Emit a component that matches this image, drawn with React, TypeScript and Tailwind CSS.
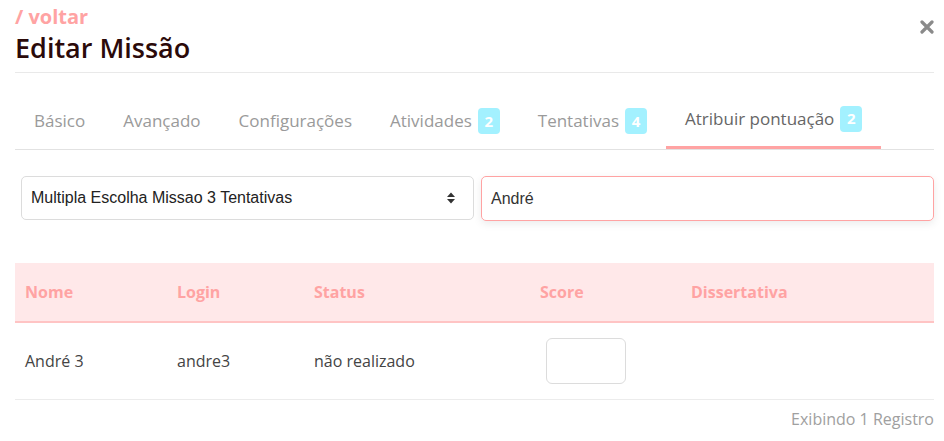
const tabs = [
  { label: "Básico" },
  { label: "Avançado" },
  { label: "Configurações" },
  { label: "Atividades", badge: 2 },
  { label: "Tentativas", badge: 4 },
  { label: "Atribuir pontuação", badge: 2, active: true },
];

const rows = [{ nome: "André 3", login: "andre3", status: "não realizado" }];

function App() {
  return (
    <div className="min-h-[441px] w-[944px] bg-white pl-[15px] pr-[10px] pt-[4px] font-['Open_Sans',sans-serif]">
      <div className="relative border-b border-[#e9e9e9] pb-[8px]">
        <a className="block text-[20px] font-bold leading-[26px] text-[#ffa3a3]">/ voltar</a>
        <h1 className="mt-[2px] text-[27px] font-semibold leading-[32px] text-[#2b0a0a]">Editar Missão</h1>
        <button type="button" className="absolute right-0 top-[16px] text-[#8a8a8a]">
          <svg width="14" height="14" viewBox="0 0 14 14">
            <path d="M2 2 L12 12 M12 2 L2 12" stroke="currentColor" strokeWidth="3.2" strokeLinecap="round" />
          </svg>
        </button>
      </div>

      <div className="mt-[23px] flex border-b border-[#e2e2e2]">
        {tabs.map((tab) => (
          <div
            key={tab.label}
            className={
              tab.active
                ? "flex h-[53px] items-center gap-[6px] border-b-[3px] border-[#ffa3a3] px-[19px] pb-[5px] text-[17px] text-[#666]"
                : "flex h-[53px] items-center gap-[6px] px-[19px] pb-[3px] text-[17px] text-[#9a9a9a]"
            }
          >
            <span>{tab.label}</span>
            {tab.badge && (
              <span className="flex h-[26px] w-[22px] items-center justify-center rounded-[4px] bg-[#a3f1ff] text-[15px] font-bold text-white">
                {tab.badge}
              </span>
            )}
          </div>
        ))}
      </div>

      <div className="mt-[26px] grid grid-cols-2 gap-[7px] pl-[6px] font-['Liberation_Sans',Arial,sans-serif]">
        <div className="flex h-[44px] items-center justify-between rounded-[5px] border border-[#dcdcdc] pl-[9px] pr-[18px] text-[16px] text-[#222]">
          <span>Multipla Escolha Missao 3 Tentativas</span>
          <svg width="8" height="12" viewBox="0 0 8 12" className="text-[#333]">
            <path d="M0 5 L4 0.5 L8 5 Z M0 7 L4 11.5 L8 7 Z" fill="currentColor" />
          </svg>
        </div>
        <div className="flex h-[45px] items-center rounded-[5px] border border-[#ffa3a3] pl-[9px] text-[16px] text-[#333] shadow-[0_3px_8px_rgba(0,0,0,0.08)]">
          André
        </div>
      </div>

      <table className="mt-[42px] w-full border-collapse text-left text-[16px]">
        <thead>
          <tr className="h-[59px] border-b-2 border-[#ffc4c4] bg-[#ffe8e9] text-[#ffa3a3]">
            <th className="w-[152px] pl-[10px] font-bold">Nome</th>
            <th className="w-[137px] pl-[10px] font-bold">Login</th>
            <th className="w-[226px] pl-[10px] font-bold">Status</th>
            <th className="w-[151px] pl-[10px] font-bold">Score</th>
            <th className="pl-[10px] font-bold">Dissertativa</th>
          </tr>
        </thead>
        <tbody>
          {rows.map((row) => (
            <tr key={row.login} className="h-[77px] border-b border-[#ececec] text-[#444]">
              <td className="pl-[10px]">{row.nome}</td>
              <td className="pl-[10px]">{row.login}</td>
              <td className="pl-[10px]">{row.status}</td>
              <td className="pl-[16px]">
                <div className="h-[46px] w-[80px] rounded-[6px] border border-[#dcdcdc]" />
              </td>
              <td />
            </tr>
          ))}
        </tbody>
      </table>

      <div className="pt-[7px] text-right text-[16px] text-[#a0a0a0]">Exibindo 1 Registro</div>
    </div>
  );
}

export default App;
